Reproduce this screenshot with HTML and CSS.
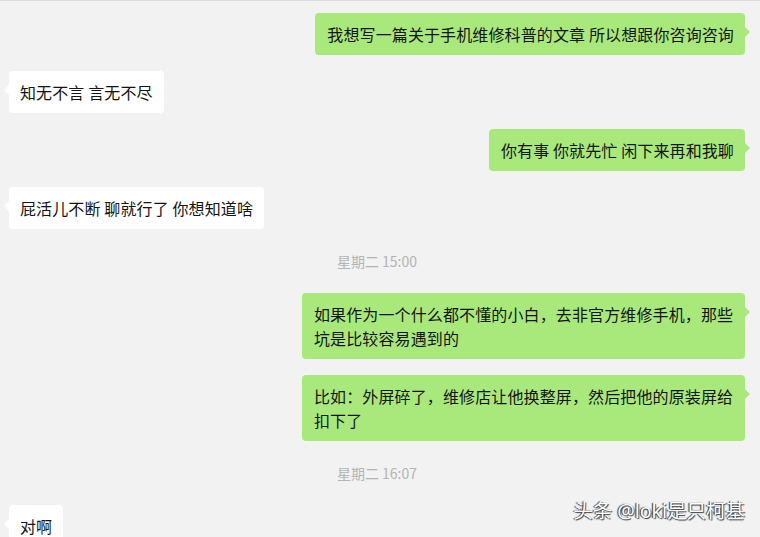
FILE: index.html
```html
<!DOCTYPE html>
<html lang="zh-CN">
<head>
  <meta charset="UTF-8" />
  <meta name="viewport" content="width=device-width, initial-scale=1" />
  <title>聊天记录</title>
  <link rel="stylesheet" href="styles.css">
</head>
<body>

  <div class="chat">
    <div class="row me"><div class="bubble">我想写一篇关于手机维修科普的文章 所以想跟你咨询咨询</div></div>
    <div class="row"><div class="bubble">知无不言 言无不尽</div></div>
    <div class="row me"><div class="bubble">你有事 你就先忙 闲下来再和我聊</div></div>
    <div class="row"><div class="bubble">屁活儿不断 聊就行了 你想知道啥</div></div>

    <div class="time">星期二 15:00</div>

    <div class="row me"><div class="bubble">如果作为一个什么都不懂的小白，去非官方维修手机，那些坑是比较容易遇到的</div></div>
    <div class="row me"><div class="bubble">比如：外屏碎了，维修店让他换整屏，然后把他的原装屏给扣下了</div></div>

    <div class="time">星期二 16:07</div>

    <div class="row"><div class="bubble">对啊</div></div>
  </div>

  <div class="watermark">头条 @loki是只柯基</div>

</body>
</html>
```

FILE: styles.css
```css
body {
  background-color: #f2f2f2;
  color: #141414;
  font-family: 'Noto Sans CJK SC', 'Noto Sans', sans-serif;
  margin: 0;
  border-top: 1px solid #dcdcdc;
  height: 536px;
  overflow: hidden;
}

.chat {
  display: flex;
  flex-direction: column;
  gap: 16px;
  padding: 12px 15px 0 9px;
}

.row {
  display: flex;
}

.row.me {
  justify-content: flex-end;
}

.bubble {
  position: relative;
  max-width: 443px;
  box-sizing: border-box;
  padding: 9px 11px 9px 11px;
  border-radius: 4px;
  background: #ffffff;
  font-size: 16px;
  line-height: 24px;
  letter-spacing: 0.12px;
}

.bubble::after {
  content: '';
  position: absolute;
  top: 14px;
  left: -5px;
  border-top: 5px solid transparent;
  border-bottom: 5px solid transparent;
  border-right: 5px solid #ffffff;
}

.me .bubble {
  background: #a9e97b;
  padding: 9px 11px 9px 12px;
}

.me .bubble::after {
  left: auto;
  right: -5px;
  border-right: none;
  border-left: 5px solid #a9e97b;
}

.time {
  text-align: center;
  font-size: 14px;
  line-height: 32px;
  color: #b4b4b4;
}

.watermark {
  position: absolute;
  right: 15px;
  top: 495px;
  font-family: 'Noto Sans', 'Noto Sans CJK SC', sans-serif;
  font-size: 19.5px;
  color: #ffffff;
  text-shadow: -1px 0 1px #222, 1px 1px 1px #444;
}
```
